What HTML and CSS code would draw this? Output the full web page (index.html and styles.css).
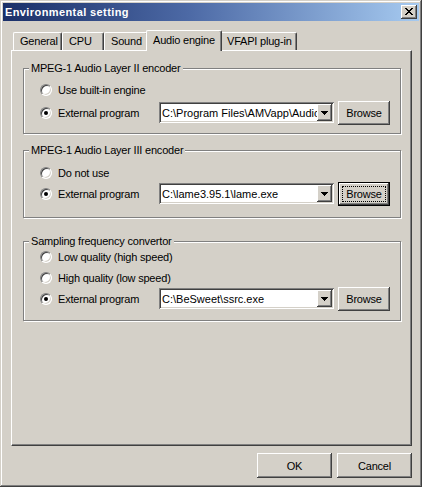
FILE: index.html
```html
<!DOCTYPE html>
<html>
<head>
<meta charset="utf-8">
<title>Environmental setting</title>
<link rel="stylesheet" href="styles.css">
</head>
<body>
<div class="window">
  <div class="titlebar">
    <span class="title">Environmental setting</span>
    <span class="close"><svg width="8" height="7" viewBox="0 0 8 7" shape-rendering="crispEdges"><path fill="#000" d="M0 0h2v1H0zM6 0h2v1H6zM1 1h2v1H1zM5 1h2v1H5zM2 2h4v1H2zM3 3h2v1H3zM2 4h4v1H2zM1 5h2v1H1zM5 5h2v1H5zM0 6h2v1H0zM6 6h2v1H6z"/></svg></span>
  </div>
  <div class="client">
    <div class="tabs">
      <div class="tab t-general">General</div>
      <div class="tab t-cpu">CPU</div>
      <div class="tab t-sound">Sound</div>
      <div class="tab active t-audio">Audio engine</div>
      <div class="tab t-vfapi">VFAPI plug-in</div>
    </div>
    <div class="panel">
      <div class="group g1">
        <span class="legend">MPEG-1 Audio Layer II encoder</span>
        <div class="row"><span class="opt"><span class="radio"></span>Use built-in engine</span></div>
        <div class="row prog">
          <span class="opt"><span class="radio on"></span>External program</span>
          <div class="combo"><span class="val">C:\Program Files\AMVapp\Audio\</span><span class="drop"><svg width="7" height="4" viewBox="0 0 7 4" shape-rendering="crispEdges"><path fill="#000" d="M0 0h7v1H0zM1 1h5v1H1zM2 2h3v1H2zM3 3h1v1H3z"/></svg></span></div>
          <button class="btn">Browse</button>
        </div>
      </div>
      <div class="group g2">
        <span class="legend">MPEG-1 Audio Layer III encoder</span>
        <div class="row"><span class="opt"><span class="radio"></span>Do not use</span></div>
        <div class="row prog">
          <span class="opt"><span class="radio on"></span>External program</span>
          <div class="combo"><span class="val">C:\lame3.95.1\lame.exe</span><span class="drop"><svg width="7" height="4" viewBox="0 0 7 4" shape-rendering="crispEdges"><path fill="#000" d="M0 0h7v1H0zM1 1h5v1H1zM2 2h3v1H2zM3 3h1v1H3z"/></svg></span></div>
          <button class="btn default"><span class="focus">Browse</span></button>
        </div>
      </div>
      <div class="group g3">
        <span class="legend">Sampling frequency convertor</span>
        <div class="row"><span class="opt"><span class="radio"></span>Low quality (high speed)</span></div>
        <div class="row"><span class="opt"><span class="radio"></span>High quality (low speed)</span></div>
        <div class="row prog">
          <span class="opt"><span class="radio on"></span>External program</span>
          <div class="combo"><span class="val">C:\BeSweet\ssrc.exe</span><span class="drop"><svg width="7" height="4" viewBox="0 0 7 4" shape-rendering="crispEdges"><path fill="#000" d="M0 0h7v1H0zM1 1h5v1H1zM2 2h3v1H2zM3 3h1v1H3z"/></svg></span></div>
          <button class="btn">Browse</button>
        </div>
      </div>
    </div>
    <div class="buttons">
      <button class="btn big">OK</button>
      <button class="btn big">Cancel</button>
    </div>
  </div>
</div>
</body>
</html>
```

FILE: styles.css
```css
* { box-sizing: border-box; }
html, body { margin: 0; padding: 0; }
body {
  width: 422px;
  height: 487px;
  overflow: hidden;
  background: #d4d0c8;
  color: #000;
  font-family: "Liberation Sans", Arial, sans-serif;
  font-size: 11px;
  letter-spacing: -0.2px;
}
.window {
  width: 422px;
  height: 487px;
  padding: 3px;
  background: #d4d0c8;
  box-shadow: inset -1px -1px 0 #404040, inset 1px 1px 0 #d4d0c8, inset -2px -2px 0 #808080, inset 2px 2px 0 #fff;
}
.titlebar {
  height: 18px;
  display: flex;
  align-items: center;
  justify-content: space-between;
  padding: 0 2px;
  background: linear-gradient(90deg, #1a2f68 0%, #4d6aa6 45%, #a6caf0 100%);
}
.title {
  color: #fff;
  font-weight: bold;
  letter-spacing: 0.4px;
  line-height: 18px;
}
.close {
  width: 16px;
  height: 14px;
  display: flex;
  align-items: flex-start;
  padding: 3px 0 0 4px;
  background: #d4d0c8;
  box-shadow: inset -1px -1px 0 #404040, inset 1px 1px 0 #fff, inset -2px -2px 0 #808080;
}
.close svg, .drop svg { display: block; }
.client {
  padding: 9px 0 0 8px;
}
.tabs {
  display: flex;
  align-items: flex-start;
  height: 20px;
  padding-left: 2px;
}
.tab {
  position: relative;
  flex: none;
  height: 18px;
  margin-top: 2px;
  padding-left: 6px;
  line-height: 17px;
  white-space: nowrap;
  background: #d4d0c8;
  border-left: 1px solid #fff;
  border-top: 1px solid #fff;
  border-right: 1px solid #404040;
  border-radius: 2px 2px 0 0;
  box-shadow: inset -1px 0 0 #808080;
}
.t-general { width: 49px; }
.t-cpu { width: 42px; }
.t-sound { width: 44px; }
.t-audio { width: 76px; }
.t-vfapi { width: 77px; }
.tab.active {
  z-index: 1;
  height: 21px;
  margin: 0 -2px -1px;
  line-height: 18px;
}
.panel {
  width: 401px;
  height: 396px;
  padding-top: 17px;
  border-left: 1px solid #fff;
  border-top: 1px solid #fff;
  border-right: 1px solid #404040;
  border-bottom: 1px solid #404040;
  box-shadow: inset -1px -1px 0 #808080;
}
.group {
  position: relative;
  margin: 0 10px 0 11px;
  padding-left: 16px;
  border: 1px solid #808080;
  box-shadow: 1px 1px 0 #fff, inset 1px 1px 0 #fff;
}
.legend {
  position: absolute;
  top: -7px;
  left: 5px;
  padding: 0 2px;
  line-height: 13px;
  background: #d4d0c8;
  white-space: nowrap;
}
.g1 { padding-top: 10px; padding-bottom: 10px; }
.g1 .prog { margin-top: 2px; }
.g2 { margin-top: 16px; padding-top: 11px; padding-bottom: 13px; }
.g3 { margin-top: 23px; padding-top: 4px; padding-bottom: 11px; }
.row {
  display: flex;
  align-items: center;
  height: 21px;
}
.opt {
  flex: none;
  width: 119px;
  display: flex;
  align-items: center;
  gap: 6px;
  white-space: nowrap;
}
.radio {
  position: relative;
  flex: none;
  width: 12px;
  height: 12px;
  border-radius: 50%;
  background: #fff;
  border: 1px solid;
  border-color: #808080 #fff #fff #808080;
  box-shadow: inset 1px 1px 0 #404040, inset -1px -1px 0 #d4d0c8;
}
.radio.on::after {
  content: "";
  position: absolute;
  left: 3px;
  top: 3px;
  width: 4px;
  height: 4px;
  border-radius: 50%;
  background: #000;
}
.combo {
  flex: none;
  width: 175px;
  height: 21px;
  margin-right: 4px;
  padding: 2px;
  display: flex;
  align-items: center;
  background: #fff;
  box-shadow: inset 1px 1px 0 #808080, inset -1px -1px 0 #fff, inset 2px 2px 0 #404040, inset -2px -2px 0 #d4d0c8;
}
.val {
  flex: 1;
  min-width: 0;
  padding-left: 1px;
  overflow: hidden;
  white-space: nowrap;
  letter-spacing: 0;
}
.drop {
  flex: none;
  width: 15px;
  height: 17px;
  display: flex;
  align-items: center;
  justify-content: center;
  background: #d4d0c8;
  box-shadow: inset -1px -1px 0 #404040, inset 1px 1px 0 #fff, inset -2px -2px 0 #808080;
}
.btn {
  flex: none;
  width: 52px;
  height: 24px;
  margin: 0;
  padding: 0;
  border: 0;
  font: inherit;
  letter-spacing: inherit;
  color: #000;
  background: #d4d0c8;
  box-shadow: inset -1px -1px 0 #404040, inset 1px 1px 0 #fff, inset -2px -2px 0 #808080;
}
.btn.default {
  padding: 3px;
  border: 1px solid #000;
}
.focus {
  display: flex;
  align-items: center;
  justify-content: center;
  width: 100%;
  height: 100%;
  border: 1px dotted #000;
}
.buttons {
  width: 401px;
  margin-top: 7px;
  display: flex;
  justify-content: flex-end;
  gap: 5px;
}
.btn.big {
  width: 75px;
  height: 25px;
}
```
